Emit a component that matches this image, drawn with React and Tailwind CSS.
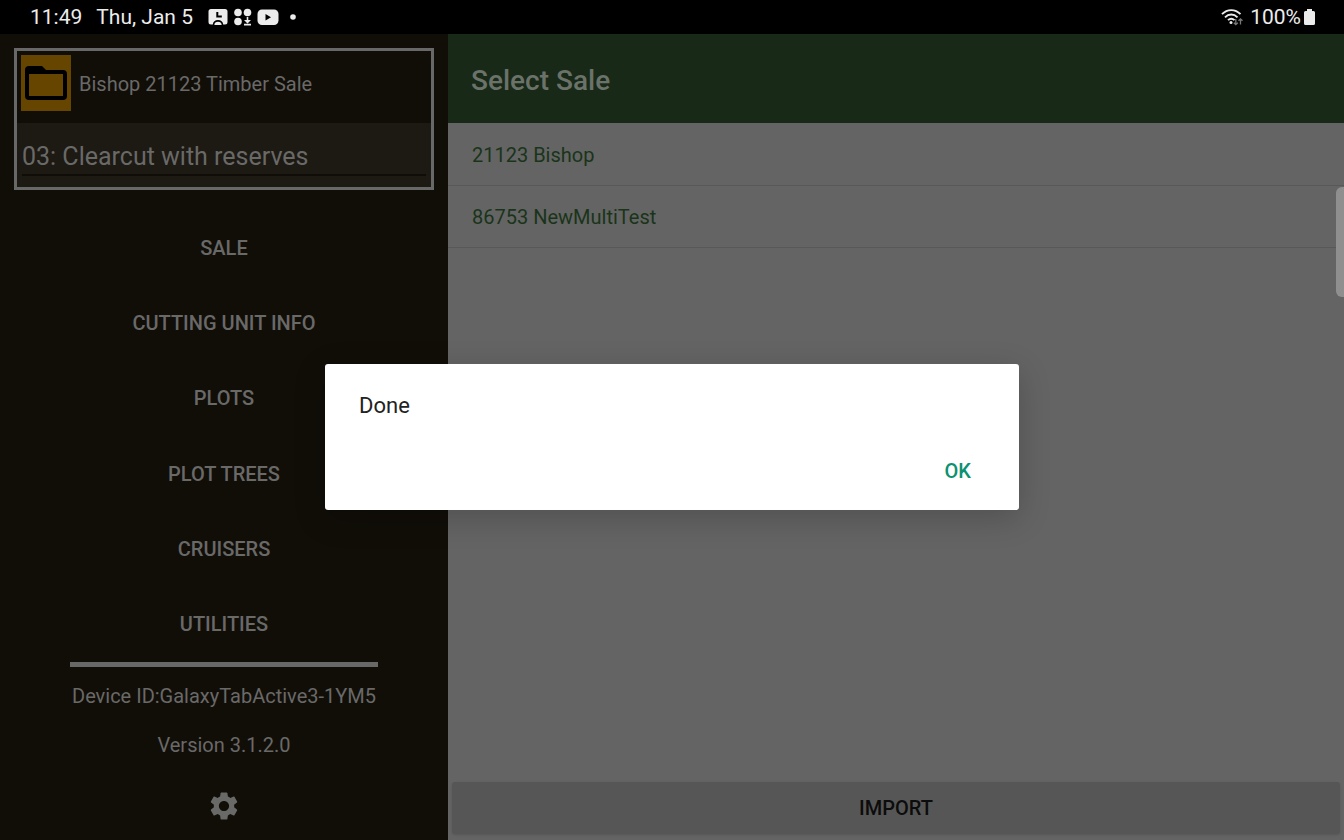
import React from "react";

const menuItems = ["SALE", "CUTTING UNIT INFO", "PLOTS", "PLOT TREES", "CRUISERS", "UTILITIES"];
const sales = ["21123 Bishop", "86753 NewMultiTest"];

function StatusBar() {
  return (
    <header className="flex h-[34px] shrink-0 items-center justify-between bg-black pl-[30px] pr-7 text-[21px] leading-6 text-[#ececec]">
      <div className="flex items-center">
        <span>11:49</span>
        <span className="ml-[14px]">Thu, Jan 5</span>
        <svg className="ml-[15px]" width="20" height="18" viewBox="0 0 20 18" aria-hidden="true">
          <path fill="#ececec" d="M3 1h14a2.500 2.500 0 0 1 2.500 2.500v10.500a2.500 2.500 0 0 1-2.500 2.500h-1.800c-.3-3-2.200-4.500-5.200-4.500s-4.900 1.500-5.200 4.500H3a2.500 2.500 0 0 1-2.500-2.500V3.500A2.500 2.500 0 0 1 3 1z" />
          <path d="M8.300 4h2v3.500h3.500V9.500H8.300z" fill="#000" />
          <path d="M6.300 17c.2-2.200 1.500-3.200 3.700-3.200s3.500 1 3.700 3.200z" fill="#ececec" />
        </svg>
        <svg className="ml-[6px]" width="18" height="18" viewBox="0 0 18 18" fill="#ececec" aria-hidden="true">
          <circle cx="4" cy="4.500" r="3.800" />
          <circle cx="13.500" cy="4.500" r="3.800" />
          <circle cx="4" cy="13.500" r="3.800" />
          <path d="M12.700 9h1.600v3h2.700l-3.500 3.500-3.500-3.500h2.700zM10 15.800h7v1.600h-7z" />
        </svg>
        <svg className="ml-[5px]" width="22" height="18" viewBox="0 0 22 18" aria-hidden="true">
          <rect x="0.500" y="1.500" width="21" height="15.500" rx="4.500" fill="#ececec" />
          <path d="M8.500 6v6.500l5.500-3.250z" fill="#000" />
        </svg>
        <svg className="ml-[11px]" width="6" height="6" viewBox="0 0 6 6" aria-hidden="true">
          <circle cx="3" cy="3" r="2.800" fill="#ececec" />
        </svg>
      </div>
      <div className="flex items-center">
        <svg width="23" height="18" viewBox="0 0 23 18" fill="none" aria-hidden="true">
          <path d="M1 6.200C6.300.7 14.200.7 19.500 6.200M4 9.300c3.700-3.700 8.800-3.700 12.500 0M7 12.100c2-1.800 4.500-1.800 6.500 0" stroke="#ececec" strokeWidth="1.900" />
          <circle cx="10" cy="14.600" r="1.500" fill="#ececec" />
          <path d="M14.800 11v5.500M12.800 14.700l2 2 2-2M19.500 16.500V11M17.500 12.800l2-2 2 2" stroke="#777" strokeWidth="1.300" />
        </svg>
        <span className="ml-[6px]">100%</span>
        <svg className="ml-[2px]" width="13" height="18" viewBox="0 0 13 18" fill="#ececec" aria-hidden="true">
          <path d="M4 1h5v2h1.500A1.500 1.500 0 0 1 12 4.500v11a1.500 1.500 0 0 1-1.500 1.500h-8A1.500 1.500 0 0 1 1 15.500v-11A1.500 1.500 0 0 1 2.500 3H4z" />
        </svg>
      </div>
    </header>
  );
}

function Sidebar() {
  return (
    <aside className="flex w-1/3 shrink-0 flex-col bg-[#110e08] px-[14px] pb-[17px] pt-[14px] text-[20px] leading-6 text-[#696968]">
      <section className="border-[3px] border-[#686868]">
        <div className="flex h-[72px] items-start gap-2 px-1 pt-1">
          <button aria-label="Open sale" className="flex h-14 w-[50px] items-center justify-center bg-[#664500]">
            <svg width="42" height="34" viewBox="0 0 42 34" aria-hidden="true">
              <path fill="#000" fillRule="evenodd" d="M4 0h13l4 4h17a4 4 0 0 1 4 4v22a4 4 0 0 1-4 4H4a4 4 0 0 1-4-4V4a4 4 0 0 1 4-4zM4 8v22h34V8z" />
            </svg>
          </button>
          <p className="self-stretch pt-[17px]">Bishop 21123 Timber Sale</p>
        </div>
        <div className="h-16 bg-[#1d1913] px-[5px] pt-4">
          <select
            aria-label="Cutting unit"
            className="h-[37px] w-full appearance-none border-b-2 border-[#100d08] bg-transparent p-0 text-[25px] leading-8 text-[#696968] outline-none"
          >
            <option>03: Clearcut with reserves</option>
          </select>
        </div>
      </section>
      <nav className="mt-5 flex flex-1 flex-col font-medium">
        {menuItems.map((item) => (
          <button key={item} className="flex-1">
            {item}
          </button>
        ))}
      </nav>
      <hr className="mx-14 border-0 border-t-[5px] border-[#686868]" />
      <p className="mt-[17px] text-center">Device ID:GalaxyTabActive3-1YM5</p>
      <p className="mt-[25px] text-center">Version 3.1.2.0</p>
      <button aria-label="Settings" className="mt-8 self-center">
        <svg width="34" height="34" viewBox="0 0 24 24" fill="#696968" aria-hidden="true">
          <path d="M19.140 12.940c.04-.3.060-.61.060-.94 0-.32-.02-.64-.07-.94l2.030-1.580c.18-.14.230-.41.120-.61l-1.920-3.320c-.12-.22-.37-.29-.59-.22l-2.390.96c-.5-.38-1.030-.7-1.620-.94L14.400 2.810c-.04-.24-.24-.41-.48-.41h-3.840c-.24 0-.43.170-.47.410L9.250 5.350c-.59.240-1.130.570-1.620.94L5.240 5.330c-.22-.08-.47 0-.59.220L2.740 8.870c-.12.210-.08.470.120.610l2.030 1.580c-.05.300-.09.630-.09.940s.020.640.070.940l-2.030 1.580c-.18.140-.23.410-.12.610l1.920 3.320c.12.220.37.290.59.220l2.390-.96c.5.380 1.030.7 1.620.94l.36 2.540c.05.240.24.410.48.410h3.840c.24 0 .44-.17.470-.41l.36-2.540c.59-.24 1.130-.56 1.620-.94l2.390.96c.22.080.47 0 .59-.22l1.920-3.320c.12-.22.070-.47-.12-.61l-2.010-1.580zM12 15.600c-1.980 0-3.600-1.620-3.600-3.600s1.620-3.600 3.600-3.600 3.600 1.620 3.600 3.600-1.620 3.600-3.600 3.600z" />
        </svg>
      </button>
    </aside>
  );
}

function SaleList() {
  return (
    <main className="flex min-w-0 flex-1 flex-col bg-[#646464]">
      <div className="flex h-[89px] items-center bg-[#182917] px-[23px] pt-1">
        <h1 className="text-[28px] font-medium leading-8 text-[#6b726a]">Select Sale</h1>
      </div>
      <ul className="pt-px text-[20px] leading-6 text-[#1a341a]">
        {sales.map((sale) => (
          <li key={sale} className="border-b border-[#585858]">
            <button className="flex h-[61px] w-full items-center px-6 text-left">{sale}</button>
          </li>
        ))}
      </ul>
      <button className="mx-1 mb-[6px] mt-auto h-[52px] rounded-[3px] bg-[#565656] text-[20px] font-medium leading-6 text-[#0c0c0c] shadow-sm">
        IMPORT
      </button>
    </main>
  );
}

export default function App() {
  return (
    <div className="relative flex min-h-screen flex-col bg-black font-['Roboto',sans-serif]">
      <StatusBar />
      <div className="flex flex-1">
        <Sidebar />
        <SaleList />
      </div>
      <div className="absolute right-0 top-[187px] h-[110px] w-2 rounded-l-md bg-[#8f8f8f]" />
      <div className="absolute inset-x-0 bottom-0 top-[34px] flex items-center justify-center">
        <div
          role="alertdialog"
          aria-modal="true"
          aria-labelledby="dialog-message"
          className="flex w-[694px] max-w-full flex-col rounded-[3px] bg-white px-[34px] pb-[14px] pt-[26px] shadow-[0_8px_32px_rgba(0,0,0,0.2)]"
        >
          <p id="dialog-message" className="text-[22px] leading-8 text-[#222]">Done</p>
          <button className="mt-6 h-[50px] self-end px-[14px] text-[20px] font-medium leading-6 text-[#0a9271]">OK</button>
        </div>
      </div>
    </div>
  );
}
